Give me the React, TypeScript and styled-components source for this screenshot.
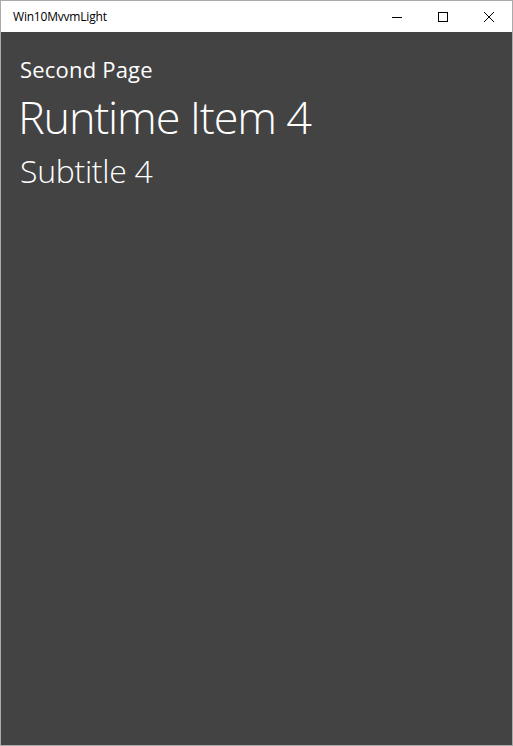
import styled, { createGlobalStyle } from 'styled-components';

const GlobalStyle = createGlobalStyle`
  html, body {
    margin: 0;
    padding: 0;
    height: 100%;
    background: #ffffff;
  }
  #root {
    height: 100%;
  }
`;

const Window = styled.div`
  box-sizing: border-box;
  width: 513px;
  height: 746px;
  border: 1px solid #aaaaaa;
  display: flex;
  flex-direction: column;
  font-family: 'Open Sans', 'Noto Sans', 'Liberation Sans', sans-serif;
`;

const TitleBar = styled.div`
  height: 31px;
  background: #ffffff;
  display: flex;
  align-items: center;
  flex-shrink: 0;
`;

const TitleText = styled.div`
  flex: 1;
  padding-left: 12px;
  font-size: 12px;
  color: #000000;
  letter-spacing: -0.2px;
`;

const CaptionButton = styled.div`
  width: 46px;
  height: 31px;
  display: flex;
  align-items: center;
  justify-content: center;
`;

const Content = styled.div`
  flex: 1;
  background: #434343;
  padding: 20px 0 0 19px;
  color: #ffffff;
`;

const Heading = styled.div<{ $size: number; $weight: number; $line: number; $spacing?: number; $indent?: number }>`
  font-size: ${p => p.$size}px;
  font-weight: ${p => p.$weight};
  line-height: ${p => p.$line}px;
  letter-spacing: ${p => p.$spacing ?? 0}px;
  margin-left: ${p => p.$indent ?? 0}px;
  white-space: nowrap;
`;

export default function App() {
  return (
    <>
      <GlobalStyle />
      <Window>
        <TitleBar>
          <TitleText>Win10MvvmLight</TitleText>
          <CaptionButton>
            <svg width="10" height="10" viewBox="0 0 10 10">
              <path d="M0 5.5h10" stroke="#000" strokeWidth="1" />
            </svg>
          </CaptionButton>
          <CaptionButton>
            <svg width="10" height="10" viewBox="0 0 10 10">
              <rect x="0.5" y="0.5" width="9" height="9" fill="none" stroke="#000" strokeWidth="1" />
            </svg>
          </CaptionButton>
          <CaptionButton>
            <svg width="10" height="10" viewBox="0 0 10 10">
              <path d="M0 0L10 10M10 0L0 10" stroke="#000" strokeWidth="1" />
            </svg>
          </CaptionButton>
        </TitleBar>
        <Content>
          <Heading $size={22} $weight={400} $line={35} $spacing={0.2}>Second Page</Heading>
          <Heading $size={45} $weight={300} $line={59} $spacing={-1.2} $indent={-2}>Runtime Item 4</Heading>
          <Heading $size={32} $weight={300} $line={49} $spacing={-0.3}>Subtitle 4</Heading>
        </Content>
      </Window>
    </>
  );
}
